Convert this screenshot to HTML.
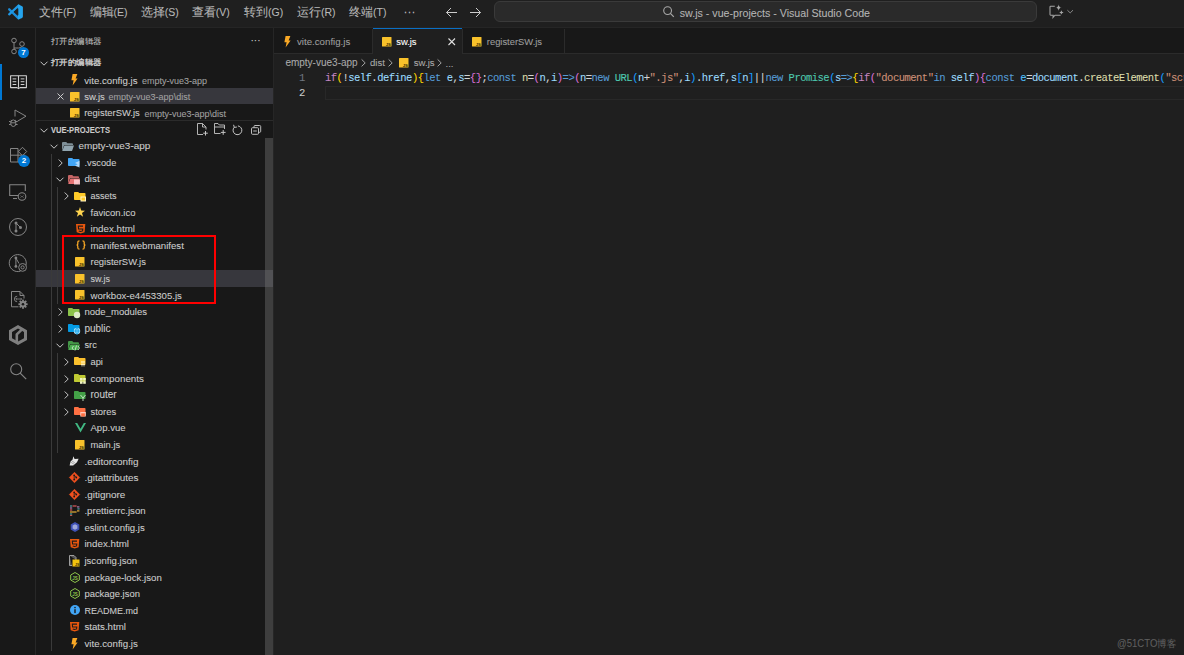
<!DOCTYPE html><html><head><meta charset="utf-8"><style>
*{margin:0;padding:0;box-sizing:border-box}
html,body{width:1184px;height:655px;overflow:hidden;background:#1f1f1f;font-family:"Liberation Sans",sans-serif;color:#cccccc}
div,span,svg{position:absolute}
.t{white-space:nowrap;-webkit-text-stroke:0.08px currentColor}
svg{overflow:visible}
</style></head><body>
<div style="left:0px;top:0px;width:1184px;height:27px;background:#1f1f1f;"></div>
<div style="left:0px;top:27px;width:1184px;height:1px;background:#252525;"></div>
<div style="left:0px;top:28px;width:35px;height:627px;background:#181818;"></div>
<div style="left:35px;top:28px;width:1px;height:627px;background:#282828;"></div>
<div style="left:36px;top:28px;width:237px;height:627px;background:#181818;"></div>
<div style="left:273px;top:28px;width:1px;height:627px;background:#262626;"></div>
<div style="left:274px;top:28px;width:910px;height:25px;background:#181818;"></div>
<div style="left:274px;top:53px;width:910px;height:1px;background:#2b2b2b;"></div>
<svg style="left:0px;top:0px" width="30" height="24" viewBox="0 0 30 24">
<path d="M9.2 9.3 L18.6 18.3" stroke="#1b8cd8" stroke-width="2.3" stroke-linecap="round"/>
<path d="M9.2 14.3 L18.6 5.5" stroke="#1f98e4" stroke-width="2.3" stroke-linecap="round"/>
<path d="M17.8 5.0 Q18.6 4.6 19.6 5 L22.1 6.2 Q22.9 6.6 22.9 7.6 V16.6 Q22.9 17.6 22.1 18 L19.6 19.1 Q18.6 19.5 17.8 19 Z" fill="#25a5ee"/>
<path d="M18.3 8.5 L14.1 11.85 L18.3 15.2 Z" fill="#1f1f1f"/>
</svg>
<div class="t" style="left:38.9px;top:4px;height:16px;line-height:16px;font-size:10.5px;color:#b8b8b8"><span style="position:static;font-size:11.8px;vertical-align:0.4px">文件</span>(F)</div>
<div class="t" style="left:89.5px;top:4px;height:16px;line-height:16px;font-size:10.5px;color:#b8b8b8"><span style="position:static;font-size:11.8px;vertical-align:0.4px">编辑</span>(E)</div>
<div class="t" style="left:140.7px;top:4px;height:16px;line-height:16px;font-size:10.5px;color:#b8b8b8"><span style="position:static;font-size:11.8px;vertical-align:0.4px">选择</span>(S)</div>
<div class="t" style="left:191.7px;top:4px;height:16px;line-height:16px;font-size:10.5px;color:#b8b8b8"><span style="position:static;font-size:11.8px;vertical-align:0.4px">查看</span>(V)</div>
<div class="t" style="left:244px;top:4px;height:16px;line-height:16px;font-size:10.5px;color:#b8b8b8"><span style="position:static;font-size:11.8px;vertical-align:0.4px">转到</span>(G)</div>
<div class="t" style="left:297px;top:4px;height:16px;line-height:16px;font-size:10.5px;color:#b8b8b8"><span style="position:static;font-size:11.8px;vertical-align:0.4px">运行</span>(R)</div>
<div class="t" style="left:349px;top:4px;height:16px;line-height:16px;font-size:10.5px;color:#b8b8b8"><span style="position:static;font-size:11.8px;vertical-align:0.4px">终端</span>(T)</div>
<div class="t" style="left:403.5px;top:5.00px;height:14px;line-height:14px;font-size:12px;color:#bdbdbd;font-weight:normal;">···</div>
<svg style="left:445px;top:6px" width="13" height="13" viewBox="0 0 13 13"><path d="M12 6.5 H1.5 M6 2 L1.5 6.5 L6 11" stroke="#cccccc" stroke-width="1" fill="none"/></svg>
<svg style="left:469px;top:6px" width="13" height="13" viewBox="0 0 13 13"><path d="M1 6.5 H11.5 M7 2 L11.5 6.5 L7 11" stroke="#cccccc" stroke-width="1" fill="none"/></svg>
<div style="left:494px;top:1px;width:543px;height:21px;border:1px solid #3a3a3a;border-radius:6px;background:#2a2a2a"></div>
<svg style="left:663px;top:6px" width="12" height="12" viewBox="0 0 12 12"><circle cx="4.6" cy="4.6" r="3.9" stroke="#a8a8a8" stroke-width="1.1" fill="none"/><path d="M7.4 7.4 L10.8 10.8" stroke="#a8a8a8" stroke-width="1.2"/></svg>
<div class="t" style="left:679.8px;top:5.60px;height:14px;line-height:14px;font-size:10.65px;color:#b4b4b4;font-weight:normal;">sw.js - vue-projects - Visual Studio Code</div>
<svg style="left:1049px;top:5px" width="26" height="14" viewBox="0 0 26 14"><path d="M5.8 1.3 H1.6 Q1 1.3 1 1.9 V9.6 Q1 10.2 1.6 10.2 H4.2 L4 12.4 L6 10.2 H11.6" stroke="#a6a6a6" stroke-width="1.05" fill="none"/><path d="M9.6 -0.6 Q9.9 2.3 12.8 2.6 Q9.9 2.9 9.6 5.8 Q9.3 2.9 6.4 2.6 Q9.3 2.3 9.6 -0.6 Z" fill="#a6a6a6"/><path d="M12.4 5.2 Q12.6 7.2 14.6 7.4 Q12.6 7.6 12.4 9.6 Q12.2 7.6 10.2 7.4 Q12.2 7.2 12.4 5.2 Z" fill="#a6a6a6"/><path d="M18.4 5.2 L21.2 7.9 L24 5.2" stroke="#8a8a8a" stroke-width="1" fill="none"/></svg>
<div style="left:0px;top:64px;width:2px;height:36px;background:#0078d4;"></div>
<svg style="left:9px;top:37px" width="18" height="18" viewBox="0 0 18 18"><circle cx="5" cy="3.5" r="2.3" stroke="#858585" stroke-width="1" fill="none"/><circle cx="5" cy="14.5" r="2.3" stroke="#858585" stroke-width="1" fill="none"/><circle cx="13" cy="7" r="2.3" stroke="#858585" stroke-width="1" fill="none"/><path d="M5 5.8 V12.2 M5 11 H9.5 Q13 11 13 9.3" stroke="#858585" stroke-width="1" fill="none"/></svg>
<div style="left:18px;top:47px;width:11px;height:11px;border-radius:50%;background:#0078d4;color:#fff;font-size:8px;font-weight:bold;line-height:11px;text-align:center">7</div>
<svg style="left:10px;top:75px" width="17" height="15" viewBox="0 0 17 15"><path d="M0.6 0.8 H16.4 V12.6 H10 L8.5 13.6 L7 12.6 H0.6 Z" stroke="#d0d0d0" stroke-width="1.1" fill="none" stroke-linejoin="round"/><path d="M8.5 0.8 V12.8" stroke="#d0d0d0" stroke-width="1.1"/><path d="M2.6 3.9 H6.3 M2.6 6.7 H6.3 M2.6 9.5 H6.3 M10.7 3.9 H14.4 M10.7 6.7 H14.4 M10.7 9.5 H14.4" stroke="#d0d0d0" stroke-width="1"/></svg>
<svg style="left:9px;top:109px" width="18" height="19" viewBox="0 0 18 19"><path d="M6 1 L17 7.2 L8.5 12.2 M6 1 V7.5" stroke="#858585" stroke-width="1" fill="none"/><ellipse cx="4.3" cy="14.2" rx="2.6" ry="3.3" stroke="#858585" stroke-width="1" fill="none"/><path d="M0 12.5 H1.8 M0 15.5 H1.8 M6.8 12.5 H8.6 M6.8 15.5 H8.6 M1.8 11.2 L3 12 M6.8 11.2 L5.6 12 M1.7 13.8 H6.9" stroke="#858585" stroke-width="1" fill="none"/></svg>
<svg style="left:10px;top:147px" width="18" height="17" viewBox="0 0 18 17"><path d="M0.5 1.5 H8 V15 H0.5 Z M0.5 8.2 H15 V15 H8" stroke="#858585" stroke-width="1" fill="none"/><path d="M12.5 0.3 L16.7 4.5 L12.5 8.7 L8.3 4.5 Z" stroke="#858585" stroke-width="1" fill="none"/></svg>
<div style="left:18px;top:155px;width:12px;height:12px;border-radius:50%;background:#0078d4;color:#fff;font-size:8px;font-weight:bold;line-height:12px;text-align:center">2</div>
<svg style="left:9px;top:184.2px" width="18" height="17" viewBox="0 0 18 17"><path d="M9.5 11.5 H0.7 V0.7 H16.3 V7" stroke="#858585" stroke-width="1.1" fill="none"/><path d="M4 14.5 H8" stroke="#858585" stroke-width="1.1"/><circle cx="13" cy="12.5" r="3.8" stroke="#858585" stroke-width="1.1" fill="#181818"/><path d="M11.6 11.6 L12.6 12.6 L11.6 13.6 M14.4 11.6 L13.4 12.6 L14.4 13.6" stroke="#858585" stroke-width="0.8" fill="none"/></svg>
<svg style="left:9px;top:217.5px" width="18" height="18" viewBox="0 0 18 18"><circle cx="9" cy="9" r="8.5" stroke="#858585" stroke-width="1" fill="none"/><circle cx="7" cy="5" r="1.5" fill="#858585"/><circle cx="7" cy="13" r="1.5" fill="#858585"/><circle cx="11.5" cy="9.5" r="1.5" fill="#858585"/><path d="M7 5 V13 M7 5 L11.5 9.5" stroke="#858585" stroke-width="1" fill="none"/></svg>
<svg style="left:9px;top:254.3px" width="18" height="18" viewBox="0 0 18 18"><path d="M16.4 12.8 A8.5 8.5 0 1 0 11.6 17.1" stroke="#858585" stroke-width="1" fill="none"/><circle cx="6.9" cy="4" r="1.4" fill="#858585"/><circle cx="6.9" cy="12.4" r="1.4" fill="#858585"/><path d="M6.9 4 V12.4 M6.9 4 L10 9.5" stroke="#858585" stroke-width="1" fill="none"/><circle cx="13.6" cy="13.4" r="3.9" stroke="#858585" stroke-width="1" fill="#181818"/><circle cx="13.6" cy="13.4" r="1.6" stroke="#858585" stroke-width="1" fill="none"/></svg>
<svg style="left:11px;top:291px" width="17" height="18" viewBox="0 0 17 18"><path d="M7.5 15.8 H0.5 V0.5 H9 L13 4.5 V7.5" stroke="#858585" stroke-width="1" fill="none"/><path d="M9 0.5 V4.5 H13" stroke="#858585" stroke-width="1" fill="none"/><path d="M6.2 5.2 A2.8 2.8 0 1 0 6.2 10.8" stroke="#858585" stroke-width="0.9" fill="none"/><path d="M5 8 H10.5 M5.8 6.9 L4.7 8 L5.8 9.1 M9.6 6.9 L10.7 8 L9.6 9.1" stroke="#858585" stroke-width="0.8" fill="none"/><circle cx="12" cy="13.2" r="3.3" fill="#858585"/><rect x="-0.9" y="-4.6" width="1.8" height="2.2" fill="#858585" transform="translate(12 13.2) rotate(0)"/><rect x="-0.9" y="-4.6" width="1.8" height="2.2" fill="#858585" transform="translate(12 13.2) rotate(45)"/><rect x="-0.9" y="-4.6" width="1.8" height="2.2" fill="#858585" transform="translate(12 13.2) rotate(90)"/><rect x="-0.9" y="-4.6" width="1.8" height="2.2" fill="#858585" transform="translate(12 13.2) rotate(135)"/><rect x="-0.9" y="-4.6" width="1.8" height="2.2" fill="#858585" transform="translate(12 13.2) rotate(180)"/><rect x="-0.9" y="-4.6" width="1.8" height="2.2" fill="#858585" transform="translate(12 13.2) rotate(225)"/><rect x="-0.9" y="-4.6" width="1.8" height="2.2" fill="#858585" transform="translate(12 13.2) rotate(270)"/><rect x="-0.9" y="-4.6" width="1.8" height="2.2" fill="#858585" transform="translate(12 13.2) rotate(315)"/><circle cx="12" cy="13.2" r="1.3" fill="#181818"/></svg>
<svg style="left:6px;top:322px" width="24" height="26" viewBox="0 0 24 26"><path d="M12 3 L21 8.2 V18 L12 23 L3 18 V8.2 Z M12 6.4 L18 9.9 V16.3 L12 19.6 L6 16.3 V9.9 Z" fill="#7f7f7f" fill-rule="evenodd"/><path d="M15.8 7.6 L10.8 12.4 V21" stroke="#7f7f7f" stroke-width="2.6" fill="none" stroke-linejoin="round"/></svg>
<svg style="left:9.5px;top:363px" width="18" height="18" viewBox="0 0 18 18"><circle cx="6.2" cy="6.2" r="5.5" stroke="#858585" stroke-width="1.1" fill="none"/><path d="M10.2 10.2 L16.2 16.2" stroke="#858585" stroke-width="1.2"/></svg>
<div class="t" style="left:51.0px;top:34.90px;height:14px;line-height:14px;font-size:8px;color:#c0c0c0;font-weight:normal;transform:scaleX(1.055);transform-origin:0 50%">打开的编辑器</div>
<div class="t" style="left:250.5px;top:33.50px;height:14px;line-height:14px;font-size:10px;color:#cccccc;font-weight:normal;">···</div>
<svg style="left:39.5px;top:61.0px" width="8" height="5" viewBox="0 0 8 5"><path d="M0.5 0.7 L4 4.2 L7.5 0.7" stroke="#c5c5c5" stroke-width="1" fill="none"/></svg>
<div class="t" style="left:51.0px;top:55.90px;height:14px;line-height:14px;font-size:8px;color:#d0d0d0;font-weight:normal;transform:scaleX(1.055);transform-origin:0 50%;-webkit-text-stroke:0.3px currentColor">打开的编辑器</div>
<div style="left:36px;top:88.2px;width:237px;height:16px;background:#37373d;"></div>
<svg style="left:70.9px;top:74.1px" width="7" height="12" viewBox="0 0 7 12"><path d="M1.6 0 H6.4 L4.6 4.4 H6.6 L1.6 11.6 L2.6 6.2 H0.4 Z" fill="#f9a825"/></svg>
<div class="t" style="left:84.2px;top:73.50px;height:14px;line-height:14px;font-size:9.7px;color:#cccccc;font-weight:normal;">vite.config.js</div>
<div class="t" style="left:142px;top:74.00px;height:14px;line-height:14px;font-size:9.0px;color:#a0a0a0;font-weight:normal;">empty-vue3-app</div>
<svg style="left:57px;top:92.5px" width="7" height="7" viewBox="0 0 7 7"><path d="M0.5 0.5 L6.5 6.5 M6.5 0.5 L0.5 6.5" stroke="#cccccc" stroke-width="1"/></svg>
<svg style="left:69.60000000000001px;top:91.5px" width="10" height="10" viewBox="0 0 10 10"><rect x="0" y="0" width="9.5" height="9.5" fill="#f9c22b" rx="0.6"/><text x="8.9" y="8.9" font-size="4.3" font-family="Liberation Sans" font-weight="bold" fill="#3b3100" text-anchor="end">JS</text></svg>
<div class="t" style="left:84.2px;top:89.70px;height:14px;line-height:14px;font-size:9.5px;color:#cccccc;font-weight:normal;">sw.js</div>
<div class="t" style="left:108.6px;top:90.20px;height:14px;line-height:14px;font-size:9.0px;color:#a0a0a0;font-weight:normal;">empty-vue3-app\dist</div>
<svg style="left:69.60000000000001px;top:108.10000000000001px" width="10" height="10" viewBox="0 0 10 10"><rect x="0" y="0" width="9.5" height="9.5" fill="#f9c22b" rx="0.6"/><text x="8.9" y="8.9" font-size="4.3" font-family="Liberation Sans" font-weight="bold" fill="#3b3100" text-anchor="end">JS</text></svg>
<div class="t" style="left:84.2px;top:106.30px;height:14px;line-height:14px;font-size:9.45px;color:#cccccc;font-weight:normal;">registerSW.js</div>
<div class="t" style="left:144.5px;top:106.80px;height:14px;line-height:14px;font-size:9.0px;color:#a0a0a0;font-weight:normal;">empty-vue3-app\dist</div>
<div style="left:36px;top:120px;width:237px;height:1px;background:#2b2b2b;"></div>
<svg style="left:39.5px;top:127.5px" width="8" height="5" viewBox="0 0 8 5"><path d="M0.5 0.7 L4 4.2 L7.5 0.7" stroke="#c5c5c5" stroke-width="1" fill="none"/></svg>
<div class="t" style="left:51.2px;top:123.10px;height:14px;line-height:14px;font-size:8.4px;color:#cccccc;font-weight:bold;transform:scaleX(0.905);transform-origin:0 50%">VUE-PROJECTS</div>
<svg style="left:197px;top:123px" width="11" height="13" viewBox="0 0 11 13"><path d="M6 11.5 H0.5 V0.5 H5.5 L9 4 V6.5 M5.5 0.5 V4 H9" stroke="#c5c5c5" stroke-width="0.9" fill="none"/><path d="M8.5 8 V12.5 M6.2 10.2 H10.8" stroke="#c5c5c5" stroke-width="1"/></svg>
<svg style="left:214.4px;top:123px" width="12" height="12" viewBox="0 0 12 12"><path d="M6.5 10.5 H0.5 V0.5 H4 L5.3 2 H10.5 V6" stroke="#c5c5c5" stroke-width="0.9" fill="none"/><path d="M0.5 4 H10.5" stroke="#c5c5c5" stroke-width="0.9"/><path d="M9.2 7 V11.8 M6.8 9.4 H11.6" stroke="#c5c5c5" stroke-width="1"/></svg>
<svg style="left:232px;top:124.5px" width="12" height="12" viewBox="0 0 12 12"><path d="M2.3 2.2 A4.4 4.4 0 1 0 5.9 0.9" stroke="#c5c5c5" stroke-width="1" fill="none"/><path d="M1.6 -0.2 L2.3 2.4 L4.9 2.0" stroke="#c5c5c5" stroke-width="1" fill="none"/></svg>
<svg style="left:251px;top:124.8px" width="11" height="11" viewBox="0 0 11 11"><path d="M3 2.6 V1.5 Q3 0.5 4 0.5 H8.7 Q9.7 0.5 9.7 1.5 V6.3 Q9.7 7.3 8.7 7.3 H7.6" stroke="#c5c5c5" stroke-width="0.95" fill="none"/><rect x="0.5" y="2.7" width="7" height="6.6" rx="1" stroke="#c5c5c5" stroke-width="0.95" fill="none"/><path d="M2.2 6 H5.8" stroke="#c5c5c5" stroke-width="0.95"/></svg>
<div style="left:36px;top:270.32px;width:237px;height:16.5px;background:#37373d;"></div>
<div style="left:51.1px;top:154.195px;width:1px;height:497.305px;background:#3a3a3a;"></div>
<div style="left:57.2px;top:187.375px;width:1px;height:116.13px;background:#3a3a3a;"></div>
<div style="left:57.2px;top:353.275px;width:1px;height:99.54000000000008px;background:#3a3a3a;"></div>
<svg style="left:49.5px;top:144.0px" width="8" height="5" viewBox="0 0 8 5"><path d="M0.5 0.7 L4 4.2 L7.5 0.7" stroke="#c5c5c5" stroke-width="1" fill="none"/></svg>
<svg style="left:62.3px;top:141.8px" width="12" height="10" viewBox="0 0 12 10"><path d="M0 1 Q0 0 1 0 H4.2 L5.4 1.2 H10 Q11 1.2 11 2.2 V3 H2.2 L0 8.8 Z" fill="#90a4ae" opacity="0.85"/><path d="M2.4 3.4 H12 L10 9 H0.2 Z" fill="#90a4ae"/></svg>
<div class="t" style="left:78.4px;top:139.30px;height:14px;line-height:14px;font-size:9.96px;color:#cccccc;font-weight:normal;">empty-vue3-app</div>
<svg style="left:57.55px;top:158.99px" width="5" height="8" viewBox="0 0 5 8"><path d="M0.7 0.5 L4.2 4 L0.7 7.5" stroke="#c5c5c5" stroke-width="1" fill="none"/></svg>
<svg style="left:68.35px;top:158.39000000000001px" width="12" height="10" viewBox="0 0 12 10"><path d="M0 0.8 Q0 0 0.8 0 H4.2 L5.2 1 H10.7 Q11.5 1 11.5 1.8 V7.2 Q11.5 8 10.7 8 H0.8 Q0 8 0 7.2 Z" fill="#42a5f5"/><path d="M7 5 L11.5 2.8 V9.5 L7 7.8 L9.6 6.3 Z" fill="#bbdefb" opacity="0.9"/></svg>
<div class="t" style="left:84.45px;top:155.89px;height:14px;line-height:14px;font-size:9.28px;color:#cccccc;font-weight:normal;">.vscode</div>
<svg style="left:55.55px;top:177.18px" width="8" height="5" viewBox="0 0 8 5"><path d="M0.5 0.7 L4 4.2 L7.5 0.7" stroke="#c5c5c5" stroke-width="1" fill="none"/></svg>
<svg style="left:68.35px;top:174.98000000000002px" width="12" height="10" viewBox="0 0 12 10"><path d="M0 1 Q0 0 1 0 H4.2 L5.4 1.2 H10 Q11 1.2 11 2.2 V3 H2.2 L0 8.8 Z" fill="#e57373" opacity="0.85"/><path d="M2.4 3.4 H12 L10 9 H0.2 Z" fill="#e57373"/><rect x="6" y="4.5" width="6" height="5" fill="#ffcdd2" opacity="0.9"/></svg>
<div class="t" style="left:84.45px;top:172.48px;height:14px;line-height:14px;font-size:9.74px;color:#cccccc;font-weight:normal;">dist</div>
<svg style="left:63.599999999999994px;top:192.17000000000002px" width="5" height="8" viewBox="0 0 5 8"><path d="M0.7 0.5 L4.2 4 L0.7 7.5" stroke="#c5c5c5" stroke-width="1" fill="none"/></svg>
<svg style="left:74.39999999999999px;top:191.57000000000002px" width="12" height="10" viewBox="0 0 12 10"><path d="M0 0.8 Q0 0 0.8 0 H4.2 L5.2 1 H10.7 Q11.5 1 11.5 1.8 V7.2 Q11.5 8 10.7 8 H0.8 Q0 8 0 7.2 Z" fill="#ffca28"/><rect x="6.5" y="4.5" width="5.5" height="5" fill="#fff3c4"/><rect x="7.5" y="5.5" width="3.5" height="3" fill="#ffca28"/></svg>
<div class="t" style="left:90.5px;top:189.07px;height:14px;line-height:14px;font-size:9.0px;color:#cccccc;font-weight:normal;">assets</div>
<svg style="left:75.4px;top:206.95999999999998px" width="10" height="10" viewBox="0 0 10 10"><path d="M5 0 L6.2 3.6 L10 3.7 L7 6 L8.1 9.7 L5 7.5 L1.9 9.7 L3 6 L0 3.7 L3.8 3.6 Z" fill="#ffd54f"/></svg>
<div class="t" style="left:90.5px;top:205.66px;height:14px;line-height:14px;font-size:9.53px;color:#cccccc;font-weight:normal;">favicon.ico</div>
<svg style="left:75.6px;top:223.95000000000002px" width="10" height="10" viewBox="0 0 10 10"><path d="M0 0 H9.3 L8.6 8.2 L4.65 9.4 L0.7 8.2 Z" fill="#e8570e"/><path d="M7.0 2.1 H2.3 L2.55 4.9 H6.8 L6.6 6.9 L4.65 7.5 L2.75 6.9" stroke="#1b1b1b" stroke-width="1.05" fill="none"/></svg>
<div class="t" style="left:90.5px;top:222.25px;height:14px;line-height:14px;font-size:9.78px;color:#cccccc;font-weight:normal;">index.html</div>
<svg style="left:75.5px;top:240.44px" width="10" height="10" viewBox="0 0 10 10"><path d="M3.5 0.8 Q1.8 0.8 1.8 2.3 V3.8 Q1.8 5 0.6 5 Q1.8 5 1.8 6.2 V7.7 Q1.8 9.2 3.5 9.2 M6.5 0.8 Q8.2 0.8 8.2 2.3 V3.8 Q8.2 5 9.4 5 Q8.2 5 8.2 6.2 V7.7 Q8.2 9.2 6.5 9.2" stroke="#f9a825" stroke-width="1.3" fill="none"/></svg>
<div class="t" style="left:90.5px;top:238.84px;height:14px;line-height:14px;font-size:9.67px;color:#cccccc;font-weight:normal;">manifest.webmanifest</div>
<svg style="left:75.2px;top:257.22999999999996px" width="10" height="10" viewBox="0 0 10 10"><rect x="0" y="0" width="9.5" height="9.5" fill="#f9c22b" rx="0.6"/><text x="8.9" y="8.9" font-size="4.3" font-family="Liberation Sans" font-weight="bold" fill="#3b3100" text-anchor="end">JS</text></svg>
<div class="t" style="left:90.5px;top:255.43px;height:14px;line-height:14px;font-size:9.42px;color:#cccccc;font-weight:normal;">registerSW.js</div>
<svg style="left:75.2px;top:273.82px" width="10" height="10" viewBox="0 0 10 10"><rect x="0" y="0" width="9.5" height="9.5" fill="#f9c22b" rx="0.6"/><text x="8.9" y="8.9" font-size="4.3" font-family="Liberation Sans" font-weight="bold" fill="#3b3100" text-anchor="end">JS</text></svg>
<div class="t" style="left:90.5px;top:272.02px;height:14px;line-height:14px;font-size:9.0px;color:#cccccc;font-weight:normal;">sw.js</div>
<svg style="left:75.2px;top:290.41px" width="10" height="10" viewBox="0 0 10 10"><rect x="0" y="0" width="9.5" height="9.5" fill="#f9c22b" rx="0.6"/><text x="8.9" y="8.9" font-size="4.3" font-family="Liberation Sans" font-weight="bold" fill="#3b3100" text-anchor="end">JS</text></svg>
<div class="t" style="left:90.5px;top:288.61px;height:14px;line-height:14px;font-size:9.62px;color:#cccccc;font-weight:normal;">workbox-e4453305.js</div>
<svg style="left:57.55px;top:308.3px" width="5" height="8" viewBox="0 0 5 8"><path d="M0.7 0.5 L4.2 4 L0.7 7.5" stroke="#c5c5c5" stroke-width="1" fill="none"/></svg>
<svg style="left:68.35px;top:307.7px" width="12" height="10" viewBox="0 0 12 10"><path d="M0 0.8 Q0 0 0.8 0 H4.2 L5.2 1 H10.7 Q11.5 1 11.5 1.8 V7.2 Q11.5 8 10.7 8 H0.8 Q0 8 0 7.2 Z" fill="#8bc34a"/><circle cx="9" cy="7" r="3.2" fill="#dcedc8"/></svg>
<div class="t" style="left:84.45px;top:305.20px;height:14px;line-height:14px;font-size:9.54px;color:#cccccc;font-weight:normal;">node_modules</div>
<svg style="left:57.55px;top:324.89px" width="5" height="8" viewBox="0 0 5 8"><path d="M0.7 0.5 L4.2 4 L0.7 7.5" stroke="#c5c5c5" stroke-width="1" fill="none"/></svg>
<svg style="left:68.35px;top:324.28999999999996px" width="12" height="10" viewBox="0 0 12 10"><path d="M0 0.8 Q0 0 0.8 0 H4.2 L5.2 1 H10.7 Q11.5 1 11.5 1.8 V7.2 Q11.5 8 10.7 8 H0.8 Q0 8 0 7.2 Z" fill="#039be5"/><circle cx="9" cy="7" r="3.2" fill="#b3e5fc"/><path d="M6 7 H12 M9 3.8 V10.2" stroke="#039be5" stroke-width="0.7"/><ellipse cx="9" cy="7" rx="1.5" ry="3.2" stroke="#039be5" stroke-width="0.7" fill="none"/></svg>
<div class="t" style="left:84.45px;top:321.79px;height:14px;line-height:14px;font-size:10.0px;color:#cccccc;font-weight:normal;">public</div>
<svg style="left:55.55px;top:343.08000000000004px" width="8" height="5" viewBox="0 0 8 5"><path d="M0.5 0.7 L4 4.2 L7.5 0.7" stroke="#c5c5c5" stroke-width="1" fill="none"/></svg>
<svg style="left:68.35px;top:340.88px" width="12" height="10" viewBox="0 0 12 10"><path d="M0 1 Q0 0 1 0 H4.2 L5.4 1.2 H10 Q11 1.2 11 2.2 V3 H2.2 L0 8.8 Z" fill="#4caf50" opacity="0.85"/><path d="M2.4 3.4 H12 L10 9 H0.2 Z" fill="#4caf50"/><path d="M5.5 5 L4 7 L5.5 9 M10 5 L11.5 7 L10 9 M8.5 4.5 L7 9.5" stroke="#c8e6c9" stroke-width="0.9" fill="none"/></svg>
<div class="t" style="left:84.45px;top:338.38px;height:14px;line-height:14px;font-size:9.32px;color:#cccccc;font-weight:normal;">src</div>
<svg style="left:63.599999999999994px;top:358.07px" width="5" height="8" viewBox="0 0 5 8"><path d="M0.7 0.5 L4.2 4 L0.7 7.5" stroke="#c5c5c5" stroke-width="1" fill="none"/></svg>
<svg style="left:74.39999999999999px;top:357.46999999999997px" width="12" height="10" viewBox="0 0 12 10"><path d="M0 0.8 Q0 0 0.8 0 H4.2 L5.2 1 H10.7 Q11.5 1 11.5 1.8 V7.2 Q11.5 8 10.7 8 H0.8 Q0 8 0 7.2 Z" fill="#fbc02d"/><path d="M7 5 H11 M7 7.5 H11 M8 4 V9.5 M10 4 V9.5" stroke="#fff3c4" stroke-width="0.8"/></svg>
<div class="t" style="left:90.5px;top:354.97px;height:14px;line-height:14px;font-size:9.32px;color:#cccccc;font-weight:normal;">api</div>
<svg style="left:63.599999999999994px;top:374.65999999999997px" width="5" height="8" viewBox="0 0 5 8"><path d="M0.7 0.5 L4.2 4 L0.7 7.5" stroke="#c5c5c5" stroke-width="1" fill="none"/></svg>
<svg style="left:74.39999999999999px;top:374.05999999999995px" width="12" height="10" viewBox="0 0 12 10"><path d="M0 0.8 Q0 0 0.8 0 H4.2 L5.2 1 H10.7 Q11.5 1 11.5 1.8 V7.2 Q11.5 8 10.7 8 H0.8 Q0 8 0 7.2 Z" fill="#c0ca33"/><rect x="6" y="4" width="2.6" height="2.6" fill="#f0f4c3"/><rect x="9.2" y="4" width="2.6" height="2.6" fill="#f0f4c3"/><rect x="6" y="7.2" width="2.6" height="2.6" fill="#f0f4c3"/><rect x="9.2" y="7.2" width="2.6" height="2.6" fill="#f0f4c3"/></svg>
<div class="t" style="left:90.5px;top:371.56px;height:14px;line-height:14px;font-size:9.82px;color:#cccccc;font-weight:normal;">components</div>
<svg style="left:63.599999999999994px;top:391.25px" width="5" height="8" viewBox="0 0 5 8"><path d="M0.7 0.5 L4.2 4 L0.7 7.5" stroke="#c5c5c5" stroke-width="1" fill="none"/></svg>
<svg style="left:74.39999999999999px;top:390.65px" width="12" height="10" viewBox="0 0 12 10"><path d="M0 0.8 Q0 0 0.8 0 H4.2 L5.2 1 H10.7 Q11.5 1 11.5 1.8 V7.2 Q11.5 8 10.7 8 H0.8 Q0 8 0 7.2 Z" fill="#43a047"/><path d="M6.5 4 L9 7 L11.5 4 M9 7 V10" stroke="#c8e6c9" stroke-width="0.9" fill="none"/></svg>
<div class="t" style="left:90.5px;top:388.15px;height:14px;line-height:14px;font-size:10.04px;color:#cccccc;font-weight:normal;">router</div>
<svg style="left:63.599999999999994px;top:407.84000000000003px" width="5" height="8" viewBox="0 0 5 8"><path d="M0.7 0.5 L4.2 4 L0.7 7.5" stroke="#c5c5c5" stroke-width="1" fill="none"/></svg>
<svg style="left:74.39999999999999px;top:407.24px" width="12" height="10" viewBox="0 0 12 10"><path d="M0 0.8 Q0 0 0.8 0 H4.2 L5.2 1 H10.7 Q11.5 1 11.5 1.8 V7.2 Q11.5 8 10.7 8 H0.8 Q0 8 0 7.2 Z" fill="#ff7043"/><rect x="6.3" y="5" width="5.5" height="4.5" fill="#ffccbc"/><rect x="7.2" y="6.3" width="3.7" height="3.2" fill="#ff7043"/></svg>
<div class="t" style="left:90.5px;top:404.74px;height:14px;line-height:14px;font-size:9.45px;color:#cccccc;font-weight:normal;">stores</div>
<svg style="left:75px;top:422.92999999999995px" width="11" height="10" viewBox="0 0 11 10"><path d="M0 0 H2.2 L5.5 5.7 L8.8 0 H11 L5.5 9.5 Z" fill="#41b883"/></svg>
<div class="t" style="left:90.5px;top:421.33px;height:14px;line-height:14px;font-size:9.56px;color:#cccccc;font-weight:normal;">App.vue</div>
<svg style="left:75.2px;top:439.71999999999997px" width="10" height="10" viewBox="0 0 10 10"><rect x="0" y="0" width="9.5" height="9.5" fill="#f9c22b" rx="0.6"/><text x="8.9" y="8.9" font-size="4.3" font-family="Liberation Sans" font-weight="bold" fill="#3b3100" text-anchor="end">JS</text></svg>
<div class="t" style="left:90.5px;top:437.92px;height:14px;line-height:14px;font-size:9.4px;color:#cccccc;font-weight:normal;">main.js</div>
<svg style="left:69.4px;top:455.91px" width="11" height="11" viewBox="0 0 11 11"><path d="M0.6 9.6 L1.6 5.6 L3.6 3.6 L4.3 0.3 L5.6 3 L9.6 2.8 L8 6.2 L4.2 9.4 Z" fill="#e6e6e6"/><path d="M1.8 6.2 L5 8.2 M2.6 4.8 L5.8 6.8" stroke="#8a8a8a" stroke-width="0.7"/></svg>
<div class="t" style="left:84.45px;top:454.51px;height:14px;line-height:14px;font-size:9.94px;color:#cccccc;font-weight:normal;">.editorconfig</div>
<svg style="left:69px;top:472.20000000000005px" width="11" height="11" viewBox="0 0 11 11"><path d="M5.5 0.3 L10.7 5.5 L5.5 10.7 L0.3 5.5 Z" fill="#f0501e" stroke="#f0501e" stroke-width="0.6" stroke-linejoin="round"/><circle cx="5.2" cy="3.3" r="0.9" fill="#181818"/><circle cx="5.2" cy="7.6" r="0.9" fill="#181818"/><circle cx="7.3" cy="5.5" r="0.9" fill="#181818"/><path d="M5.2 3.3 V7.6 M5.2 3.3 L7.3 5.5" stroke="#181818" stroke-width="0.8"/></svg>
<div class="t" style="left:84.45px;top:471.10px;height:14px;line-height:14px;font-size:9.94px;color:#cccccc;font-weight:normal;">.gitattributes</div>
<svg style="left:69px;top:488.78999999999996px" width="11" height="11" viewBox="0 0 11 11"><path d="M5.5 0.3 L10.7 5.5 L5.5 10.7 L0.3 5.5 Z" fill="#f0501e" stroke="#f0501e" stroke-width="0.6" stroke-linejoin="round"/><circle cx="5.2" cy="3.3" r="0.9" fill="#181818"/><circle cx="5.2" cy="7.6" r="0.9" fill="#181818"/><circle cx="7.3" cy="5.5" r="0.9" fill="#181818"/><path d="M5.2 3.3 V7.6 M5.2 3.3 L7.3 5.5" stroke="#181818" stroke-width="0.8"/></svg>
<div class="t" style="left:84.45px;top:487.69px;height:14px;line-height:14px;font-size:9.95px;color:#cccccc;font-weight:normal;">.gitignore</div>
<svg style="left:69.6px;top:505.38px" width="10" height="11" viewBox="0 0 10 11"><g opacity="0.8"><rect x="0" y="0.3" width="2.2" height="1.4" fill="#56b3b4"/><rect x="2.6" y="0.3" width="4" height="1.4" fill="#ea5e5e"/><rect x="7" y="1.2" width="2.4" height="1.4" fill="#bf85bf"/><rect x="0" y="2.3" width="2.2" height="1.4" fill="#bf85bf"/><rect x="7.4" y="3.2" width="2.2" height="1.4" fill="#56b3b4"/><rect x="0" y="4.3" width="2.2" height="1.4" fill="#ea5e5e"/><rect x="7" y="5.2" width="2.4" height="1.4" fill="#f7b93e"/><rect x="0" y="6.3" width="6.6" height="1.4" fill="#f7b93e"/><rect x="0" y="8.3" width="2.2" height="1.4" fill="#56b3b4"/><rect x="0" y="10" width="2.2" height="1" fill="#ea5e5e"/></g></svg>
<div class="t" style="left:84.45px;top:504.28px;height:14px;line-height:14px;font-size:9.68px;color:#cccccc;font-weight:normal;">.prettierrc.json</div>
<svg style="left:69.5px;top:522.27px" width="10" height="10" viewBox="0 0 10 10"><path d="M5 0 L9.3 2.5 V7.5 L5 10 L0.7 7.5 V2.5 Z" fill="#3f51b5"/><path d="M5 2.3 L7.4 3.6 V6.4 L5 7.7 L2.6 6.4 V3.6 Z" fill="#9fa8da"/></svg>
<div class="t" style="left:84.45px;top:520.87px;height:14px;line-height:14px;font-size:9.6px;color:#cccccc;font-weight:normal;">eslint.config.js</div>
<svg style="left:69.55px;top:539.16px" width="10" height="10" viewBox="0 0 10 10"><path d="M0 0 H9.3 L8.6 8.2 L4.65 9.4 L0.7 8.2 Z" fill="#e8570e"/><path d="M7.0 2.1 H2.3 L2.55 4.9 H6.8 L6.6 6.9 L4.65 7.5 L2.75 6.9" stroke="#1b1b1b" stroke-width="1.05" fill="none"/></svg>
<div class="t" style="left:84.45px;top:537.46px;height:14px;line-height:14px;font-size:9.78px;color:#cccccc;font-weight:normal;">index.html</div>
<svg style="left:69px;top:554.65px" width="11" height="12" viewBox="0 0 11 12"><path d="M0.5 0.5 H5 L7 2.5 V5 M0.5 0.5 V10.5 H3" stroke="#9e9e9e" stroke-width="1" fill="#555"/><rect x="3.5" y="4.5" width="7" height="7" fill="#f1c40f"/><text x="10.3" y="11" font-size="3.6" font-family="Liberation Sans" font-weight="bold" fill="#3a3000" text-anchor="end">JS</text></svg>
<div class="t" style="left:84.45px;top:554.05px;height:14px;line-height:14px;font-size:9.58px;color:#cccccc;font-weight:normal;">jsconfig.json</div>
<svg style="left:69.5px;top:571.74px" width="10" height="11" viewBox="0 0 10 11"><path d="M5 0.5 L9.3 3 V8 L5 10.5 L0.7 8 V3 Z" stroke="#8bc34a" stroke-width="1" fill="none"/><text x="5" y="7.6" font-size="4.5" font-family="Liberation Sans" font-weight="bold" fill="#8bc34a" text-anchor="middle">JS</text></svg>
<div class="t" style="left:84.45px;top:570.64px;height:14px;line-height:14px;font-size:9.68px;color:#cccccc;font-weight:normal;">package-lock.json</div>
<svg style="left:69.5px;top:588.33px" width="10" height="11" viewBox="0 0 10 11"><path d="M5 0.5 L9.3 3 V8 L5 10.5 L0.7 8 V3 Z" stroke="#8bc34a" stroke-width="1" fill="none"/><text x="5" y="7.6" font-size="4.5" font-family="Liberation Sans" font-weight="bold" fill="#8bc34a" text-anchor="middle">JS</text></svg>
<div class="t" style="left:84.45px;top:587.23px;height:14px;line-height:14px;font-size:9.42px;color:#cccccc;font-weight:normal;">package.json</div>
<svg style="left:69.5px;top:605.2199999999999px" width="10" height="10" viewBox="0 0 10 10"><circle cx="5" cy="5" r="5" fill="#42a5f5"/><rect x="4.3" y="4.2" width="1.4" height="3.9" fill="#181818"/><circle cx="5" cy="2.6" r="0.8" fill="#181818"/></svg>
<div class="t" style="left:84.45px;top:603.82px;height:14px;line-height:14px;font-size:9.03px;color:#cccccc;font-weight:normal;">README.md</div>
<svg style="left:69.55px;top:622.11px" width="10" height="10" viewBox="0 0 10 10"><path d="M0 0 H9.3 L8.6 8.2 L4.65 9.4 L0.7 8.2 Z" fill="#e8570e"/><path d="M7.0 2.1 H2.3 L2.55 4.9 H6.8 L6.6 6.9 L4.65 7.5 L2.75 6.9" stroke="#1b1b1b" stroke-width="1.05" fill="none"/></svg>
<div class="t" style="left:84.45px;top:620.41px;height:14px;line-height:14px;font-size:9.7px;color:#cccccc;font-weight:normal;">stats.html</div>
<svg style="left:70.5px;top:637.6px" width="7" height="12" viewBox="0 0 7 12"><path d="M1.6 0 H6.4 L4.6 4.4 H6.6 L1.6 11.6 L2.6 6.2 H0.4 Z" fill="#f9a825"/></svg>
<div class="t" style="left:84.45px;top:637.00px;height:14px;line-height:14px;font-size:9.71px;color:#cccccc;font-weight:normal;">vite.config.js</div>
<div style="left:265px;top:137.5px;width:8px;height:517.5px;background:rgba(121,121,121,0.4);"></div>
<div style="left:62px;top:235.3px;width:154px;height:68.7px;border:2.4px solid #ff0000"></div>
<div style="left:371.5px;top:29px;width:1px;height:25px;background:#2b2b2b;"></div>
<svg style="left:283.5px;top:36.2px" width="7" height="12" viewBox="0 0 7 12"><path d="M1.6 0 H6.4 L4.6 4.4 H6.6 L1.6 11.6 L2.6 6.2 H0.4 Z" fill="#f9a825"/></svg>
<div class="t" style="left:297px;top:35.40px;height:14px;line-height:14px;font-size:9.7px;color:#9d9d9d;font-weight:normal;">vite.config.js</div>
<div style="left:372.5px;top:28px;width:89.5px;height:26px;background:#1f1f1f;"></div>
<div style="left:372.5px;top:28px;width:89.5px;height:1.2px;background:#0a6fc4;"></div>
<svg style="left:381.59999999999997px;top:37.400000000000006px" width="10" height="10" viewBox="0 0 10 10"><rect x="0" y="0" width="9.5" height="9.5" fill="#f9c22b" rx="0.6"/><text x="8.9" y="8.9" font-size="4.3" font-family="Liberation Sans" font-weight="bold" fill="#3b3100" text-anchor="end">JS</text></svg>
<div class="t" style="left:396.2px;top:35.40px;height:14px;line-height:14px;font-size:9.4px;color:#ffffff;font-weight:normal;">sw.js</div>
<svg style="left:448px;top:37.6px" width="7.5" height="7.5" viewBox="0 0 7.5 7.5"><path d="M0.5 0.5 L7 7 M7 0.5 L0.5 7" stroke="#e0e0e0" stroke-width="1.1"/></svg>
<div style="left:462px;top:29px;width:1px;height:25px;background:#2b2b2b;"></div>
<svg style="left:471.8px;top:37.400000000000006px" width="10" height="10" viewBox="0 0 10 10"><rect x="0" y="0" width="9.5" height="9.5" fill="#f9c22b" rx="0.6"/><text x="8.9" y="8.9" font-size="4.3" font-family="Liberation Sans" font-weight="bold" fill="#3b3100" text-anchor="end">JS</text></svg>
<div class="t" style="left:486.8px;top:35.40px;height:14px;line-height:14px;font-size:9.4px;color:#9d9d9d;font-weight:normal;">registerSW.js</div>
<div style="left:563.5px;top:29px;width:1px;height:25px;background:#2b2b2b;"></div>
<div class="t" style="left:285.4px;top:56.00px;height:14px;line-height:14px;font-size:10px;color:#a9a9a9;font-weight:normal;">empty-vue3-app</div>
<svg style="left:361.3px;top:59.3px" width="6" height="9" viewBox="0 0 6 9"><path d="M0.6 0.4 L4.2 3.9 L0.6 7.4" stroke="#a9a9a9" stroke-width="0.95" fill="none"/></svg>
<div class="t" style="left:370px;top:56.00px;height:14px;line-height:14px;font-size:9.6px;color:#a9a9a9;font-weight:normal;">dist</div>
<svg style="left:388.3px;top:59.3px" width="6" height="9" viewBox="0 0 6 9"><path d="M0.6 0.4 L4.2 3.9 L0.6 7.4" stroke="#a9a9a9" stroke-width="0.95" fill="none"/></svg>
<svg style="left:398.8px;top:58.2px" width="10" height="10" viewBox="0 0 10 10"><rect x="0" y="0" width="9.5" height="9.5" fill="#f9c22b" rx="0.6"/><text x="8.9" y="8.9" font-size="4.3" font-family="Liberation Sans" font-weight="bold" fill="#3b3100" text-anchor="end">JS</text></svg>
<div class="t" style="left:413.8px;top:56.00px;height:14px;line-height:14px;font-size:9.6px;color:#a9a9a9;font-weight:normal;">sw.js</div>
<svg style="left:436.8px;top:59.3px" width="6" height="9" viewBox="0 0 6 9"><path d="M0.6 0.4 L4.2 3.9 L0.6 7.4" stroke="#a9a9a9" stroke-width="0.95" fill="none"/></svg>
<div class="t" style="left:445.5px;top:56.50px;height:14px;line-height:14px;font-size:9.6px;color:#a9a9a9;font-weight:normal;">...</div>
<div class="t" style="left:299px;top:71.4px;font-family:'Liberation Mono',monospace;font-size:10.5px;line-height:14.3px;color:#6e7681">1</div>
<div class="t" style="left:299px;top:85.9px;font-family:'Liberation Mono',monospace;font-size:10.5px;line-height:14.3px;color:#cccccc">2</div>
<div style="left:325px;top:85.6px;width:859px;height:14px;border:1px solid #282828;border-right:none"></div>
<div class="t" style="left:325px;top:71.4px;font-family:'Liberation Mono',monospace;font-size:10.5px;letter-spacing:-0.51px;line-height:14.3px"><span style="position:static;color:#c586c0">if</span><span style="position:static;color:#ffd700">(</span><span style="position:static;color:#d4d4d4">!</span><span style="position:static;color:#9cdcfe">self</span><span style="position:static;color:#d4d4d4">.</span><span style="position:static;color:#9cdcfe">define</span><span style="position:static;color:#ffd700">)</span><span style="position:static;color:#ffd700">{</span><span style="position:static;color:#569cd6">let</span><span style="position:static;color:#d4d4d4"> </span><span style="position:static;color:#9cdcfe">e</span><span style="position:static;color:#d4d4d4">,</span><span style="position:static;color:#9cdcfe">s</span><span style="position:static;color:#d4d4d4">=</span><span style="position:static;color:#da70d6">{}</span><span style="position:static;color:#d4d4d4">;</span><span style="position:static;color:#569cd6">const</span><span style="position:static;color:#d4d4d4"> </span><span style="position:static;color:#dcdcaa">n</span><span style="position:static;color:#d4d4d4">=</span><span style="position:static;color:#da70d6">(</span><span style="position:static;color:#9cdcfe">n</span><span style="position:static;color:#d4d4d4">,</span><span style="position:static;color:#9cdcfe">i</span><span style="position:static;color:#da70d6">)</span><span style="position:static;color:#569cd6">=&gt;</span><span style="position:static;color:#da70d6">(</span><span style="position:static;color:#9cdcfe">n</span><span style="position:static;color:#d4d4d4">=</span><span style="position:static;color:#569cd6">new</span><span style="position:static;color:#d4d4d4"> </span><span style="position:static;color:#4ec9b0">URL</span><span style="position:static;color:#179fff">(</span><span style="position:static;color:#9cdcfe">n</span><span style="position:static;color:#d4d4d4">+</span><span style="position:static;color:#ce9178">&quot;.js&quot;</span><span style="position:static;color:#d4d4d4">,</span><span style="position:static;color:#9cdcfe">i</span><span style="position:static;color:#179fff">)</span><span style="position:static;color:#d4d4d4">.</span><span style="position:static;color:#9cdcfe">href</span><span style="position:static;color:#d4d4d4">,</span><span style="position:static;color:#9cdcfe">s</span><span style="position:static;color:#179fff">[</span><span style="position:static;color:#9cdcfe">n</span><span style="position:static;color:#179fff">]</span><span style="position:static;color:#d4d4d4">||</span><span style="position:static;color:#569cd6">new</span><span style="position:static;color:#d4d4d4"> </span><span style="position:static;color:#4ec9b0">Promise</span><span style="position:static;color:#179fff">(</span><span style="position:static;color:#9cdcfe">s</span><span style="position:static;color:#569cd6">=&gt;</span><span style="position:static;color:#ffd700">{</span><span style="position:static;color:#c586c0">if</span><span style="position:static;color:#da70d6">(</span><span style="position:static;color:#ce9178">&quot;document&quot;</span><span style="position:static;color:#569cd6">in</span><span style="position:static;color:#d4d4d4"> </span><span style="position:static;color:#9cdcfe">self</span><span style="position:static;color:#da70d6">)</span><span style="position:static;color:#da70d6">{</span><span style="position:static;color:#569cd6">const</span><span style="position:static;color:#d4d4d4"> </span><span style="position:static;color:#4fc1ff">e</span><span style="position:static;color:#d4d4d4">=</span><span style="position:static;color:#9cdcfe">document</span><span style="position:static;color:#d4d4d4">.</span><span style="position:static;color:#dcdcaa">createElement</span><span style="position:static;color:#179fff">(</span><span style="position:static;color:#ce9178">&quot;script&quot;</span></div>
<div class="t" style="left:1117.3px;top:636.60px;height:14px;line-height:14px;font-size:10.2px;color:#5e5e5e;font-weight:normal;transform:scaleX(0.94);transform-origin:0 50%">@51CTO博客</div>
</body></html>
